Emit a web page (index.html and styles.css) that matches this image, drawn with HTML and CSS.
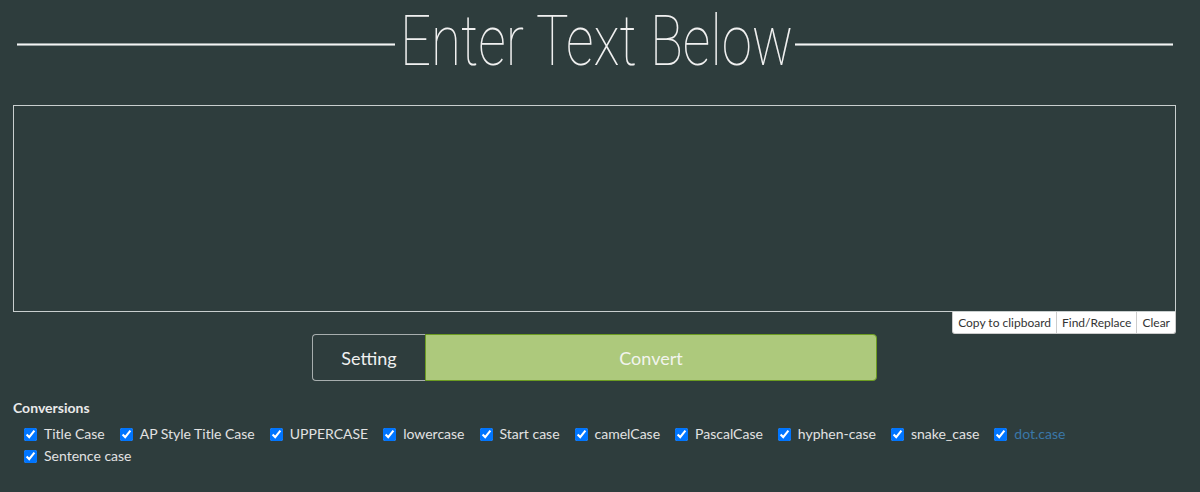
FILE: index.html
```html
<!DOCTYPE html>
<html>
<head>
<meta charset="utf-8">
<link rel="stylesheet" href="styles.css">
</head>
<body>
<div class="page">
  <div class="heading">
    <div class="rule"></div>
    <div class="title-box"><span class="title">Enter Text Below</span></div>
    <div class="rule"></div>
  </div>
  <div class="editor">
    <textarea class="input"></textarea>
    <div class="tools">
      <button class="tool">Copy to clipboard</button><button class="tool">Find/Replace</button><button class="tool">Clear</button>
    </div>
  </div>
  <div class="actions">
    <button class="setting">Setting</button><button class="convert">Convert</button>
  </div>
  <div class="conversions">
    <div class="conv-title">Conversions</div>
    <div class="conv-list">
      <label class="opt"><input type="checkbox" checked>Title Case</label>
      <label class="opt"><input type="checkbox" checked>AP Style Title Case</label>
      <label class="opt"><input type="checkbox" checked>UPPERCASE</label>
      <label class="opt"><input type="checkbox" checked>lowercase</label>
      <label class="opt"><input type="checkbox" checked>Start case</label>
      <label class="opt"><input type="checkbox" checked>camelCase</label>
      <label class="opt"><input type="checkbox" checked>PascalCase</label>
      <label class="opt"><input type="checkbox" checked>hyphen-case</label>
      <label class="opt"><input type="checkbox" checked>snake_case</label>
      <label class="opt link"><input type="checkbox" checked>dot.case</label>
      <label class="opt"><input type="checkbox" checked>Sentence case</label>
    </div>
  </div>
</div>
</body>
</html>
```

FILE: styles.css
```css
html, body {
  margin: 0;
  padding: 0;
  background: #2e3d3d;
  height: 100%;
}
body {
  font-family: Lato, "Liberation Sans", sans-serif;
  color: #e6e6e6;
  overflow: hidden;
}
.page {
  padding: 0 24px 0 13px;
}
.heading {
  display: flex;
  align-items: center;
  height: 88px;
  padding: 0 3px 0 4px;
}
.rule {
  flex: 1;
  height: 1px;
  background: #f4f4f4;
  border-top: 1px solid #9aa3a3;
  border-bottom: 1px solid #9aa3a3;
}
.title-box {
  width: 392px;
  height: 88px;
  position: relative;
  margin: 0 3px 0 5px;
}
.title {
  position: absolute;
  left: 0;
  top: -3px;
  font-family: Roboto, sans-serif;
  font-weight: 100;
  font-size: 70px;
  line-height: 88px;
  color: #f0f0f0;
  white-space: nowrap;
  transform-origin: 0 50%;
  transform: scaleX(0.78);
}
.editor {
  margin-top: 17px;
}
.input {
  display: block;
  box-sizing: border-box;
  width: 100%;
  height: 207px;
  margin: 0;
  background: transparent;
  border: 1px solid #c9cfcf;
  resize: none;
  outline: none;
}
.tools {
  display: flex;
  justify-content: flex-end;
}
.tool {
  font-family: Lato, sans-serif;
  font-size: 12px;
  color: #333;
  background: #fff;
  border: 1px solid #ccc;
  border-top: none;
  border-left: none;
  height: 22px;
  padding: 0 5px;
  margin: 0;
}
.tool:first-child {
  border-left: 1px solid #ccc;
  border-bottom-left-radius: 3px;
}
.tool:last-child {
  border-bottom-right-radius: 3px;
}
.actions {
  display: flex;
  justify-content: center;
}
.setting, .convert {
  height: 47px;
  margin: 0;
  font-family: Lato, sans-serif;
  font-size: 18px;
}
.setting {
  width: 113px;
  background: transparent;
  color: #f0f0f0;
  border: 1px solid #a7aeae;
  border-right: none;
  border-radius: 4px 0 0 4px;
}
.convert {
  width: 452px;
  background: #adc97c;
  color: #f2f4ee;
  border: 1px solid #6c9c22;
  border-radius: 0 4px 4px 0;
}
.conversions {
  margin-top: 18px;
}
.conv-title {
  font-weight: bold;
  font-size: 14px;
  color: #eaeaea;
  line-height: 17px;
}
.conv-list {
  display: flex;
  flex-wrap: wrap;
  padding-left: 10px;
  margin-top: 7px;
  column-gap: 14px;
}
.opt {
  display: flex;
  align-items: center;
  font-size: 14px;
  line-height: 22px;
  color: #e2e2e2;
}
.opt input {
  width: 13px;
  height: 13px;
  margin: 0 7px 0 1px;
}
.link {
  color: #3a77a8;
}
```
